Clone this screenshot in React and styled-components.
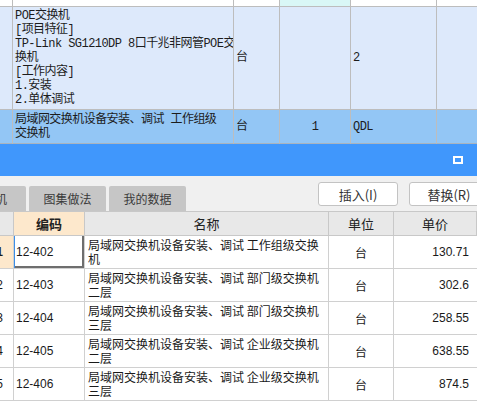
import React from 'react';
import styled, { createGlobalStyle } from 'styled-components';

const GlobalStyle = createGlobalStyle`
  html, body {
    margin: 0;
    padding: 0;
    background: #fff;
    overflow: hidden;
  }
`;

const describeLines = [
  'POE交换机',
  '[项目特征]',
  'TP-Link SG1210DP 8口千兆非网管POE交',
  '换机',
  '[工作内容]',
  '1.安装',
  '2.单体调试',
];

const quotas = [
  { n: 1, code: '12-402', name: ['局域网交换机设备安装、调试 工作组级交换', '机'], price: '130.71' },
  { n: 2, code: '12-403', name: ['局域网交换机设备安装、调试 部门级交换机', '二层'], price: '302.6' },
  { n: 3, code: '12-404', name: ['局域网交换机设备安装、调试 部门级交换机', '三层'], price: '258.55' },
  { n: 4, code: '12-405', name: ['局域网交换机设备安装、调试 企业级交换机', '二层'], price: '638.55' },
  { n: 5, code: '12-406', name: ['局域网交换机设备安装、调试 企业级交换机', '三层'], price: '874.5' },
];

const App = () => {
  return (
    <>
      <GlobalStyle />
      <Page>
        <BillGrid>
          <BillCell />
          <BillCell />
          <BillCell />
          <BillCell $bg="#d9f7f6" />
          <BillCell />
          <BillCell $last />

          <BillCell $bg="#dde9fb" />
          <BillCell $bg="#dde9fb">
            <Lines>{describeLines.join('\n')}</Lines>
          </BillCell>
          <BillCell $bg="#dde9fb">台</BillCell>
          <BillCell $bg="#dde9fb" />
          <BillCell $bg="#dde9fb">2</BillCell>
          <BillCell $bg="#dde9fb" $last />

          <BillCell $bg="#93c6f5" $edge />
          <BillCell $bg="#93c6f5" $edge>
            <Lines>{'局域网交换机设备安装、调试 工作组级\n交换机'}</Lines>
          </BillCell>
          <BillCell $bg="#93c6f5" $edge>台</BillCell>
          <BillCell $bg="#93c6f5" $edge $center>1</BillCell>
          <BillCell $bg="#93c6f5" $edge>QDL</BillCell>
          <BillCell $bg="#93c6f5" $edge $last />
        </BillGrid>

        <TitleBar>
          <MaxIcon />
        </TitleBar>

        <Toolbar>
          <Tabs>
            <Tab $cut>机</Tab>
            <Tab>图集做法</Tab>
            <Tab>我的数据</Tab>
          </Tabs>
          <Buttons>
            <ToolButton>插入(I)</ToolButton>
            <ToolButton>替换(R)</ToolButton>
          </Buttons>
        </Toolbar>

        <QuotaGrid>
          <HeadCell />
          <HeadCell $active>编码</HeadCell>
          <HeadCell>名称</HeadCell>
          <HeadCell>单位</HeadCell>
          <HeadCell>单价</HeadCell>

          {quotas.map((q) => (
            <React.Fragment key={q.code}>
              <NumCell $active={q.n === 1}>{q.n}</NumCell>
              <CodeCell $focus={q.n === 1}>{q.code}</CodeCell>
              <NameCell>
                {q.name.map((l) => (
                  <NameLine key={l}>{l}</NameLine>
                ))}
              </NameCell>
              <UnitCell>台</UnitCell>
              <PriceCell>{q.price}</PriceCell>
            </React.Fragment>
          ))}
        </QuotaGrid>
      </Page>
    </>
  );
};

export default App;

const Page = styled.div`
  width: 477px;
  height: 411px;
  overflow: hidden;
  display: flex;
  flex-direction: column;
  background: #fff;
`;

const BillGrid = styled.div`
  display: grid;
  grid-template-columns: 13px 221px 46px 71px 86px 1fr;
  grid-template-rows: 7px 103px 34px;
  font-family: "Liberation Mono", "Noto Sans CJK SC", monospace;
  font-size: 12px;
  letter-spacing: -0.55px;
  line-height: 14px;
  color: #1c1c1c;
`;

const BillCell = styled.div`
  box-sizing: border-box;
  background: ${(p) => p.$bg || '#fff'};
  border-right: ${(p) => (p.$last ? 'none' : '1px solid #bdbdbd')};
  border-bottom: 1px solid ${(p) => (p.$edge ? '#a9b4bf' : '#bdbdbd')};
  display: flex;
  align-items: center;
  justify-content: ${(p) => (p.$center ? 'center' : 'flex-start')};
  padding-left: ${(p) => (p.$center ? '0' : '2px')};
  overflow: hidden;
  white-space: nowrap;
`;

const Lines = styled.div`
  white-space: pre;
`;

const TitleBar = styled.div`
  height: 32px;
  background: #4097fc;
  display: flex;
  align-items: center;
  justify-content: flex-end;
  padding-right: 14px;
`;

const MaxIcon = styled.div`
  box-sizing: border-box;
  width: 10px;
  height: 8px;
  border: 2px solid #fff;
`;

const Toolbar = styled.div`
  height: 35px;
  background: #f0f0f0;
  display: flex;
  align-items: flex-end;
  font-family: "Noto Sans CJK SC", sans-serif;
`;

const Tabs = styled.div`
  display: flex;
  gap: 3px;
`;

const Tab = styled.div`
  box-sizing: border-box;
  width: ${(p) => (p.$cut ? '50px' : '77px')};
  margin-left: ${(p) => (p.$cut ? '-24px' : '0')};
  height: 25px;
  background: #c6c6c6;
  border-radius: 2px 2px 0 0;
  display: flex;
  align-items: center;
  justify-content: center;
  font-size: 12px;
  color: #3a3a3a;
`;

const Buttons = styled.div`
  margin-left: auto;
  margin-right: -12px;
  align-self: flex-start;
  margin-top: 6px;
  display: flex;
  gap: 11px;
`;

const ToolButton = styled.div`
  box-sizing: border-box;
  width: 80px;
  height: 24px;
  background: #fff;
  border: 1px solid #c3c3c3;
  border-radius: 3px;
  display: flex;
  align-items: center;
  justify-content: center;
  font-size: 13px;
  color: #333;
`;

const QuotaGrid = styled.div`
  margin-left: -14px;
  display: grid;
  grid-template-columns: 28px 71px 244px 65px 1fr;
  grid-template-rows: 24px repeat(5, 33px);
  border-top: 1px solid #c8c8c8;
  font-family: "Liberation Sans", "Noto Sans CJK SC", sans-serif;
  font-size: 12px;
  color: #1a1a1a;
`;

const GridCell = styled.div`
  box-sizing: border-box;
  border-right: 1px solid #d0d0d0;
  border-bottom: 1px solid #d0d0d0;
  overflow: hidden;
  white-space: nowrap;
`;

const HeadCell = styled(GridCell)`
  background: ${(p) => (p.$active ? '#fde8cc' : '#e8e8e8')};
  border-color: #c8c8c8;
  display: flex;
  align-items: center;
  justify-content: center;
  font-family: "Noto Sans CJK SC", sans-serif;
  font-size: 13px;
  font-weight: ${(p) => (p.$active ? 700 : 400)};
  color: #222;
`;

const NumCell = styled(GridCell)`
  background: ${(p) => (p.$active ? '#fde8cc' : '#fff')};
  display: flex;
  align-items: center;
  justify-content: center;
  font-family: "Liberation Sans", sans-serif;
  font-size: 12px;
  font-weight: ${(p) => (p.$active ? 700 : 400)};
`;

const CodeCell = styled(GridCell)`
  display: flex;
  align-items: center;
  padding-left: 2px;
  font-family: "Liberation Sans", sans-serif;
  font-size: 12px;
  box-shadow: ${(p) => (p.$focus ? 'inset 1px 0 0 #3d8ee6, inset -2px -2px 0 #6e6e6e' : 'none')};
`;

const NameCell = styled(GridCell)`
  padding: 2px 0 0 3px;
  line-height: 14px;
  font-family: "Noto Sans CJK SC", sans-serif;
`;

const NameLine = styled.div`
  white-space: nowrap;
  height: 14px;
`;

const UnitCell = styled(GridCell)`
  display: flex;
  align-items: center;
  justify-content: center;
  font-family: "Noto Sans CJK SC", sans-serif;
`;

const PriceCell = styled(GridCell)`
  border-right: none;
  display: flex;
  align-items: center;
  justify-content: flex-end;
  padding-right: 8px;
  font-family: "Liberation Sans", sans-serif;
  font-size: 12px;
`;
